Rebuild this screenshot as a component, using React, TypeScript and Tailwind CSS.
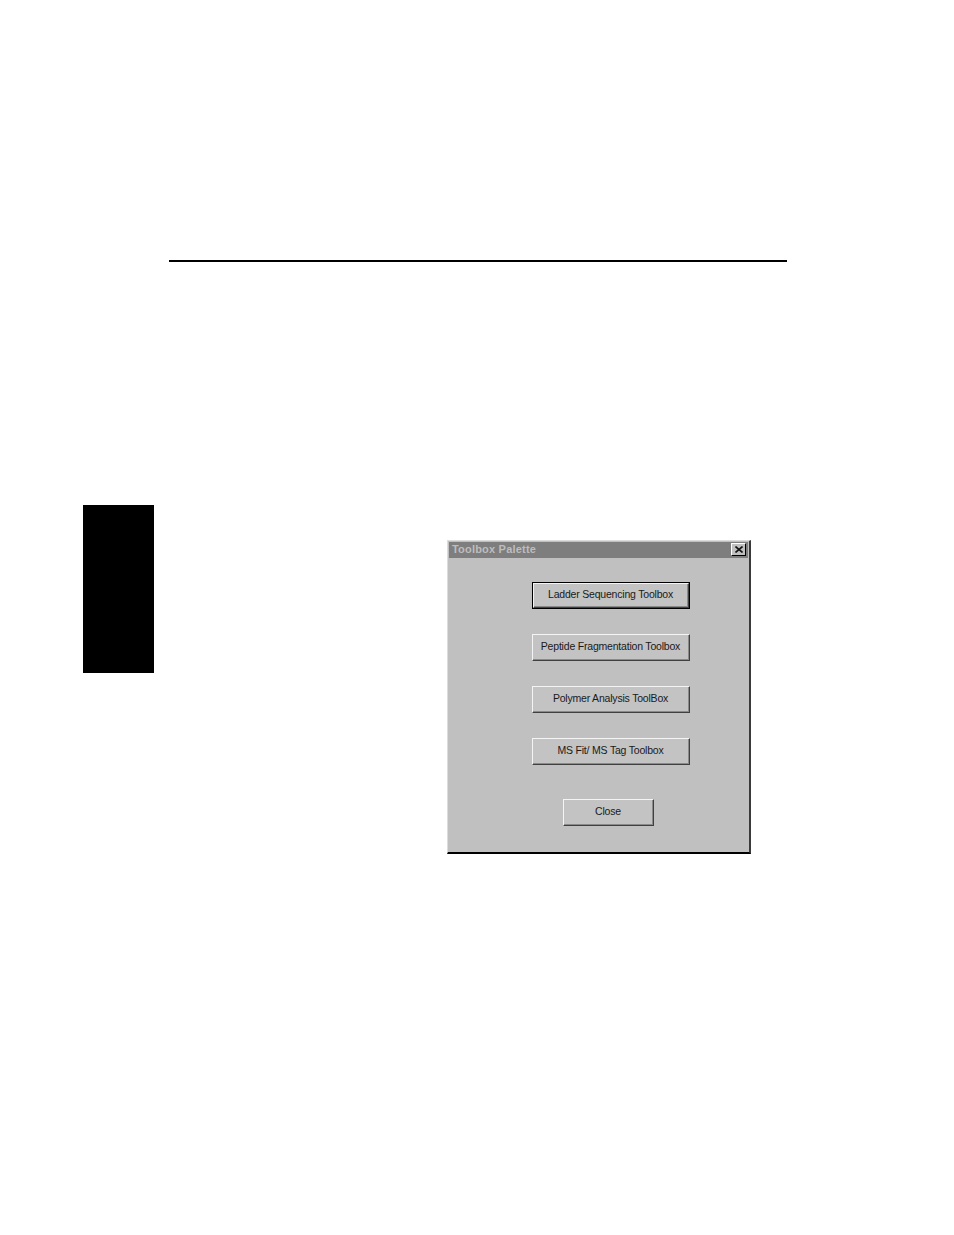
import React from "react";

const buttons = [
  { label: "Ladder Sequencing Toolbox", isDefault: true },
  { label: "Peptide Fragmentation Toolbox" },
  { label: "Polymer Analysis ToolBox" },
  { label: "MS Fit/ MS Tag Toolbox" },
];

function WinButton({
  label,
  isDefault,
  className,
}: {
  label: string;
  isDefault?: boolean;
  className: string;
}) {
  return (
    <div className={`${className} ${isDefault ? "border border-black" : ""}`}>
      <div className="h-full w-full border-t border-l border-[#f4f4f4] border-r border-b border-r-[#404040] border-b-[#404040] bg-[#c3c3c3]">
        <div className="h-full w-full flex items-center justify-center border-r border-b border-[#8a8a8a] text-[10.5px] text-[#1a1a1a] tracking-[-0.2px]">
          {label}
        </div>
      </div>
    </div>
  );
}

export default function App() {
  return (
    <div className="relative h-[1235px] w-[954px] bg-white font-['Liberation_Sans',Arial,sans-serif]">
      {/* header rule */}
      <div className="pt-[260px] pl-[169px]">
        <div className="h-[1.5px] w-[618px] bg-black" />
      </div>

      <div className="flex mt-[243px]">
        {/* chapter tab */}
        <div className="ml-[83px] h-[168px] w-[71px] bg-black" />

        {/* dialog */}
        <div className="ml-[293px] mt-[35px] h-[314px] w-[304px] border-t border-l border-[#dcdcdc] border-r-2 border-b-2 border-r-[#3a3a3a] border-b-black bg-[#c0c0c0] p-[1px]">
          <div className="flex h-[16px] items-center justify-between bg-[#7e7e7e] pl-[3px] pr-[2px]">
            <span className="text-[11px] font-bold text-[#bdbdbd] tracking-[0.2px]">Toolbox Palette</span>
            <div className="flex h-[13px] w-[15px] items-center justify-center border-t border-l border-white border-r border-b border-r-black border-b-black bg-[#c0c0c0]">
              <svg width="8" height="7" viewBox="0 0 8 7">
                <path d="M0.5 0.5 L7.5 6.5 M7.5 0.5 L0.5 6.5" stroke="#111" strokeWidth="1.6" />
              </svg>
            </div>
          </div>

          <div className="flex flex-col items-start pt-[24px] pl-[83px]">
            {buttons.map((b, i) => (
              <WinButton
                key={b.label}
                label={b.label}
                isDefault={b.isDefault}
                className={`h-[27px] w-[158px] ${i > 0 ? "mt-[25px]" : ""}`}
              />
            ))}
            <WinButton label="Close" className="ml-[31px] mt-[34px] h-[27px] w-[91px]" />
          </div>
        </div>
      </div>
    </div>
  );
}
